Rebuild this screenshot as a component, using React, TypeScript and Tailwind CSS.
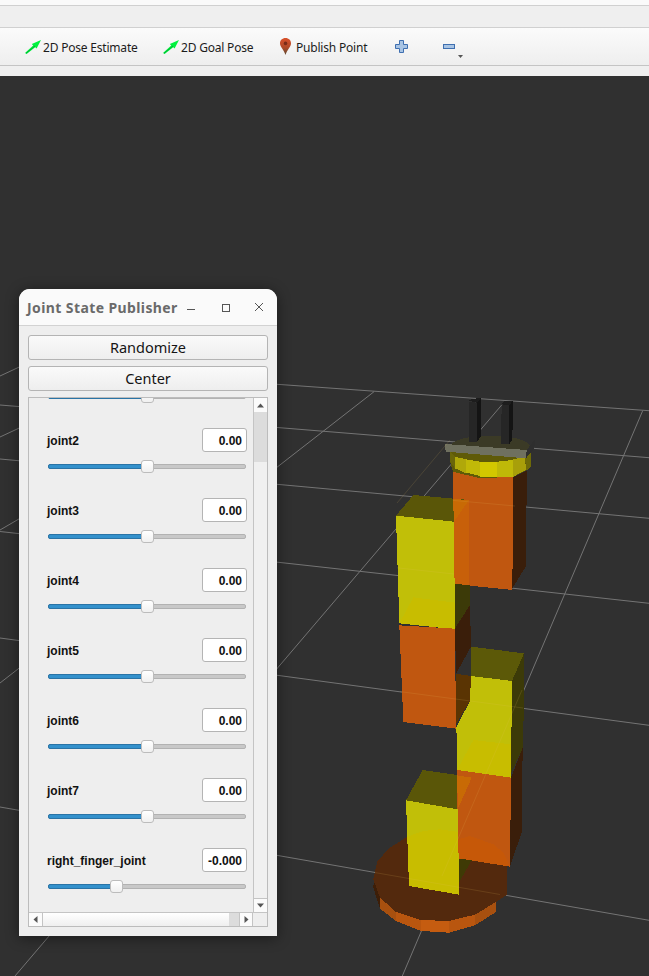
import React from "react";

const UI = "font-['Noto_Sans',sans-serif]";

function Arrow() {
  return (
    <svg width="16" height="14" viewBox="0 0 16 14" className="shrink-0">
      <path d="M0 13 L8.2 5.6 L6.8 4 L16 0 L11.6 8.6 L10.2 7.2 L1.6 14 Z" fill="#00f23e" />
      <path d="M1 13.2 L10 6" stroke="#00b034" strokeWidth="1" fill="none" />
    </svg>
  );
}

function Pin() {
  return (
    <svg width="11" height="17" viewBox="0 0 11 17" className="shrink-0">
      <defs>
        <linearGradient id="pin" x1="0" y1="0" x2="0" y2="1">
          <stop offset="0" stopColor="#d9512b" />
          <stop offset="0.55" stopColor="#b04a28" />
          <stop offset="1" stopColor="#5e4a32" />
        </linearGradient>
      </defs>
      <path d="M5.5 0 C2.2 0 0 2.4 0 5.4 C0 9 4 11.5 5.5 17 C7 11.5 11 9 11 5.4 C11 2.4 8.8 0 5.5 0 Z" fill="url(#pin)" />
      <circle cx="5.5" cy="5.4" r="1.8" fill="#7a2c18" />
    </svg>
  );
}

function Toolbar() {
  return (
    <div className={`h-[38px] flex items-center pl-[25px] border-b border-[#c4c4c4] bg-gradient-to-b from-[#fbfbfb] to-[#eeeeee] text-[12px] tracking-[-0.2px] text-[#1c1c1c] ${UI}`}>
      <Arrow />
      <span className="ml-[2px] w-[95px] whitespace-nowrap pt-[2px]">2D Pose Estimate</span>
      <div className="ml-[25px]"><Arrow /></div>
      <span className="ml-[2px] w-[71px] whitespace-nowrap pt-[2px]">2D Goal Pose</span>
      <div className="ml-[28px]"><Pin /></div>
      <span className="ml-[5px] w-[71px] whitespace-nowrap pt-[2px]">Publish Point</span>
      <svg width="13" height="13" viewBox="0 0 13 13" className="ml-[28px]">
        <path d="M4.5 0.5 H8.5 V4.5 H12.5 V8.5 H8.5 V12.5 H4.5 V8.5 H0.5 V4.5 H4.5 Z" fill="#a8c4e4" stroke="#3f6fb0" />
      </svg>
      <svg width="13" height="5" viewBox="0 0 13 5" className="ml-[35px]">
        <rect x="0.5" y="0.5" width="11" height="4" fill="#a8c4e4" stroke="#3f6fb0" />
      </svg>
      <svg width="5" height="3" viewBox="0 0 5 3" className="ml-[2px] mt-[20px]">
        <path d="M0 0 H5 L2.5 3 Z" fill="#555" />
      </svg>
    </div>
  );
}

function Thumb() {
  return (
    <div className="w-[13px] h-[13px] -ml-[1px] shrink-0 rounded-[3px] border border-[#bcbcbc] bg-gradient-to-b from-[#ffffff] to-[#f0f0f0]" />
  );
}

function Slider({ fill }: { fill: number }) {
  return (
    <div className="relative h-[13px] flex items-center w-[198px]">
      <div className="w-full h-[5px] rounded-[2px] bg-[#c8c8c8] border border-[#b2b2b2]" />
      <div className="absolute left-0 top-[4px] h-[5px] rounded-l-[2px] bg-[#3391cc] border border-[#2a74a6]" style={{ width: fill }} />
      <div className="absolute top-0" style={{ left: fill }}>
        <Thumb />
      </div>
    </div>
  );
}

function Row({ name, value, fill = 94 }: { name: string; value: string; fill?: number }) {
  return (
    <div className="h-[70px] shrink-0 pl-[18px] pt-[31px] w-[225px]">
      <div className="flex items-center justify-between h-[24px] w-[200px] font-['Liberation_Sans',sans-serif] font-bold text-[12px] text-[#111]">
        <span className="pt-[2px]">{name}</span>
        <span className="w-[45px] h-[24px] rounded-[3px] border border-[#b4b4b4] bg-white flex items-center justify-end pr-[4px] pt-[2px]">{value}</span>
      </div>
      <div className="mt-[8px] ml-[1px]">
        <Slider fill={fill} />
      </div>
    </div>
  );
}

function Btn({ children }: { children: React.ReactNode }) {
  return (
    <div className="h-[25px] rounded-[3px] border border-[#b4b4b4] bg-gradient-to-b from-[#fafafa] to-[#eeeeee] flex items-center justify-center text-[14.5px] text-[#151515]">
      {children}
    </div>
  );
}

function Tri({ d }: { d: string }) {
  return (
    <svg width="9" height="9" viewBox="0 0 9 9">
      <path d={d} fill="#555" />
    </svg>
  );
}

function JointWindow() {
  const joints = ["joint2", "joint3", "joint4", "joint5", "joint6", "joint7"];
  return (
    <div className={`absolute left-[19px] top-[213px] w-[258px] h-[647px] rounded-t-[11px] bg-[#eeeeee] shadow-[0_2px_14px_rgba(0,0,0,0.45)] flex flex-col ${UI}`}>
      <div className="h-[37px] shrink-0 rounded-t-[11px] bg-[#fafafa] border-b border-[#d2d2d2] flex items-center pl-[8px] relative">
        <span className="text-[14px] font-bold text-[#6a6a6a] tracking-[0.4px] whitespace-nowrap">Joint State Publisher</span>
        <svg width="80" height="12" viewBox="0 0 80 12" className="absolute left-[168px] top-[12px]" fill="none" stroke="#555" strokeWidth="1">
          <path d="M0 8.5 H8" />
          <rect x="35.5" y="3.5" width="7" height="7" />
          <path d="M68 2 L76 10 M76 2 L68 10" />
        </svg>
      </div>
      <div className="flex-1 flex flex-col px-[9px] pt-[9px]">
        <Btn>Randomize</Btn>
        <div className="mt-[6px]">
          <Btn>Center</Btn>
        </div>
        <div className="mt-[6px] h-[530px] border border-[#bcbcbc] flex flex-col bg-[#eeeeee]">
          <div className="h-[514px] flex">
            <div className="w-[224px] overflow-hidden">
              <div className="-mt-[71px]">
                <Row name="" value="" />
                {joints.map((j) => (
                  <Row key={j} name={j} value="0.00" />
                ))}
                <Row name="right_finger_joint" value="-0.000" fill={63} />
              </div>
            </div>
            <div className="w-[14px] border-l border-[#c4c4c4] flex flex-col bg-[#f0f0f0]">
              <div className="h-[14px] bg-[#fbfbfb] flex items-center justify-center">
                <Tri d="M1 6.5 H8 L4.5 2.5 Z" />
              </div>
              <div className="h-[50px] bg-[#dcdcdc]" />
              <div className="flex-1" />
              <div className="h-[14px] bg-[#fbfbfb] border-t border-[#c4c4c4] flex items-center justify-center">
                <Tri d="M1 2.5 H8 L4.5 6.5 Z" />
              </div>
            </div>
          </div>
          <div className="h-[14px] border-t border-[#c4c4c4] flex">
            <div className="w-[14px] bg-[#fbfbfb] border-r border-[#c4c4c4] flex items-center justify-center">
              <Tri d="M6.5 1 V8 L2.5 4.5 Z" />
            </div>
            <div className="w-[186px] bg-gradient-to-b from-[#ffffff] to-[#efefef]" />
            <div className="w-[10px] bg-[#dcdcdc]" />
            <div className="w-[14px] bg-[#fbfbfb] border-l border-r border-[#c4c4c4] flex items-center justify-center">
              <Tri d="M2.5 1 V8 L6.5 4.5 Z" />
            </div>
            <div className="flex-1 bg-[#eeeeee]" />
          </div>
        </div>
      </div>
    </div>
  );
}

const GRID: [number, number, number, number][] = [
  [277, 384.3, 649, 410.7],
  [0, 405, 649, 457.7],
  [0, 459, 649, 518.3],
  [0, 531.5, 649, 603.3],
  [0, 638, 649, 725.3],
  [0, 807, 649, 920.3],
  [0, 683, 374, 391.7],
  [15, 976, 501.7, 405],
  [642.7, 410.7, 402.3, 976],
  [0, 376, 60, 348],
  [0, 437, 60, 409],
  [0, 530, 60, 495],
];

/* the parts of the grid that show faintly through the translucent robot */
const THROUGH: [number, number, number, number][] = [
  [453, 500.4, 515, 506],
  [397, 567.8, 454, 574],
  [400, 691.6, 523, 708],
  [374, 872.4, 500, 894.5],
  [522, 690, 442, 876],
  [397, 503, 450, 440],
];

const Y = "#c1bf08";
const YB = "#c8bd00";
const O = "#c05710";
const OB = "#c86a05";
const TOP = "#5a5608";
const SD = "#3a1e0a";
const SY = "#3c3a08";

function Scene() {
  return (
    <svg className="absolute inset-0 w-full h-full" viewBox="0 76 649 900">
      {GRID.map(([a, b, c, d], i) => (
        <line key={i} x1={a} y1={b} x2={c} y2={d} stroke="#747474" strokeWidth="1" />
      ))}

      <g shapeRendering="crispEdges" transform="translate(270 626) scale(0.33333)">
        {/* base */}
        <polygon points="312,755 310,785 330,848 330,815" fill="#3d1e08" />
        <polygon points="330,815 378,858 453,882 537,885 615,866 678,828 678,858 615,898 537,920 453,915 378,885 330,848" fill="#a8500f" />
        <polygon points="453,882 537,885 537,920 453,915" fill="#c55c10" />
        <polygon points="378,858 453,882 453,915 378,885" fill="#b9560f" />
        <polygon points="537,885 615,866 615,898 537,920" fill="#b9560f" />
        <polygon points="310,760 322,705 360,665 412,632 470,614 530,610 600,628 660,652 695,685 712,725 712,805 678,828 615,866 537,885 453,882 378,858 330,815" fill="#53290d" />
        {/* lower right column */}
        <polygon points="603,62 762,82 726,165 603,150" fill="#5c5908" />
        <polygon points="726,165 762,82 760,365 723,440" fill={SY} />
        <polygon points="723,455 758,365 755,620 720,720" fill={SD} />
        <polygon points="603,150 726,165 723,455 561,432 561,335 558,305 600,225" fill={Y} />
        <polygon points="561,432 610,342 723,355 723,455" fill={YB} />
        <polygon points="561,432 723,455 720,722 564,697" fill={O} />
        <polygon points="561,448 605,455 564,548" fill={OB} />
        <polygon points="564,640 600,630 670,655 700,680 720,722 564,697" fill="#c65808" />
        <polygon points="564,697 605,703 567,770" fill="#3f3a05" />
        {/* lower left */}
        <polygon points="408,523 458,432 561,447 561,550" fill={TOP} />
        <polygon points="408,523 564,550 567,806 417,780" fill={Y} />
        <polygon points="412,632 460,615 510,610 564,618 567,806 417,780" fill={YB} />
        {/* upper lower orange */}
        <polygon points="555,0 603,0 603,62 558,143" fill={SD} />
        <polygon points="558,143 603,150 600,225 558,295" fill="#5a3403" />
      </g>

      <g shapeRendering="crispEdges" transform="translate(270 280) scale(0.33333)">
        {/* upper orange */}
        <polygon points="730,592 771,572 767,860 727,925" fill={SD} />
        <polygon points="549,575 730,592 727,930 552,912" fill={O} />
        {/* yellow box */}
        <polygon points="378,707 430,645 597,660 552,725" fill={TOP} />
        <polygon points="549,657 597,660 552,725" fill={OB} />
        <polygon points="552,725 597,660 597,915 552,912" fill="#c8600a" />
        <polygon points="552,912 600,915 600,975 555,1045" fill={SY} />
        <polygon points="600,975 600,1060 555,1060 555,1045" fill={SD} />
        <polygon points="378,707 552,725 555,1048 388,1030" fill={Y} />
        <polygon points="388,1030 430,952 555,968 555,1048" fill={YB} />
        {/* cylinder */}
        <ellipse cx="660" cy="500" rx="120" ry="33" fill="#3b3a26" />
        <polygon points="540,515 768,535 782,515 782,562 768,572 730,590 630,595 549,575 540,545" fill="#5f5a08" />
        <polygon points="540,515 555,530 555,565 540,545" fill="#6a660a" />
        <polygon points="555,530 588,538 588,580 555,565" fill="#b0a80a" />
        <polygon points="588,538 630,545 630,588 588,578" fill="#c1b908" />
        <polygon points="630,545 682,545 682,590 630,590" fill="#d2c800" />
        <polygon points="682,545 730,540 730,590 682,592" fill="#bfb908" />
        <polygon points="730,538 765,530 768,570 730,590" fill="#a89f0a" />
        <polygon points="765,525 782,515 782,562 768,572" fill="#6e6a08" />
        {/* plate */}
        <polygon points="770,510 795,478 793,505 768,535" fill="#2e2e2e" />
        <polygon points="525,492 770,510 768,535 527,515" fill="#6f705f" />
        {/* fingers */}
        <polygon points="597,365 620,368 622,485 597,487" fill="#262626" />
        <polygon points="620,368 632,355 632,470 622,485" fill="#141414" />
        <polygon points="597,362 607,356 632,355 620,368" fill="#1d1d1d" />
        <polygon points="695,375 717,376 718,492 693,492" fill="#262626" />
        <polygon points="717,376 729,362 727,480 718,492" fill="#141414" />
        <polygon points="695,373 705,362 729,362 717,376" fill="#1d1d1d" />
      </g>

      {/* upper-left orange block */}
      <g shapeRendering="crispEdges" transform="translate(270 626) scale(0.33333)">
        <polygon points="388,-2 555,8 555,10 558,308 400,288" fill={O} />
      </g>

      {THROUGH.map(([a, b, c, d], i) => (
        <line key={i} x1={a} y1={b} x2={c} y2={d} stroke="#e8c060" strokeWidth="1" opacity="0.14" />
      ))}
    </svg>
  );
}

export default function App() {
  return (
    <div className="w-[649px] h-[976px] flex flex-col overflow-hidden bg-[#303030]">
      <div className="h-[6px] shrink-0 bg-[#fafafa] border-b border-[#d0d0d0]" />
      <div className="h-[22px] shrink-0 bg-[#efefef] border-b border-[#d0d0d0]" />
      <div className="shrink-0"><Toolbar /></div>
      <div className="h-[10px] shrink-0 bg-[#efefef]" />
      <div className="relative flex-1">
        <Scene />
        <JointWindow />
      </div>
    </div>
  );
}
